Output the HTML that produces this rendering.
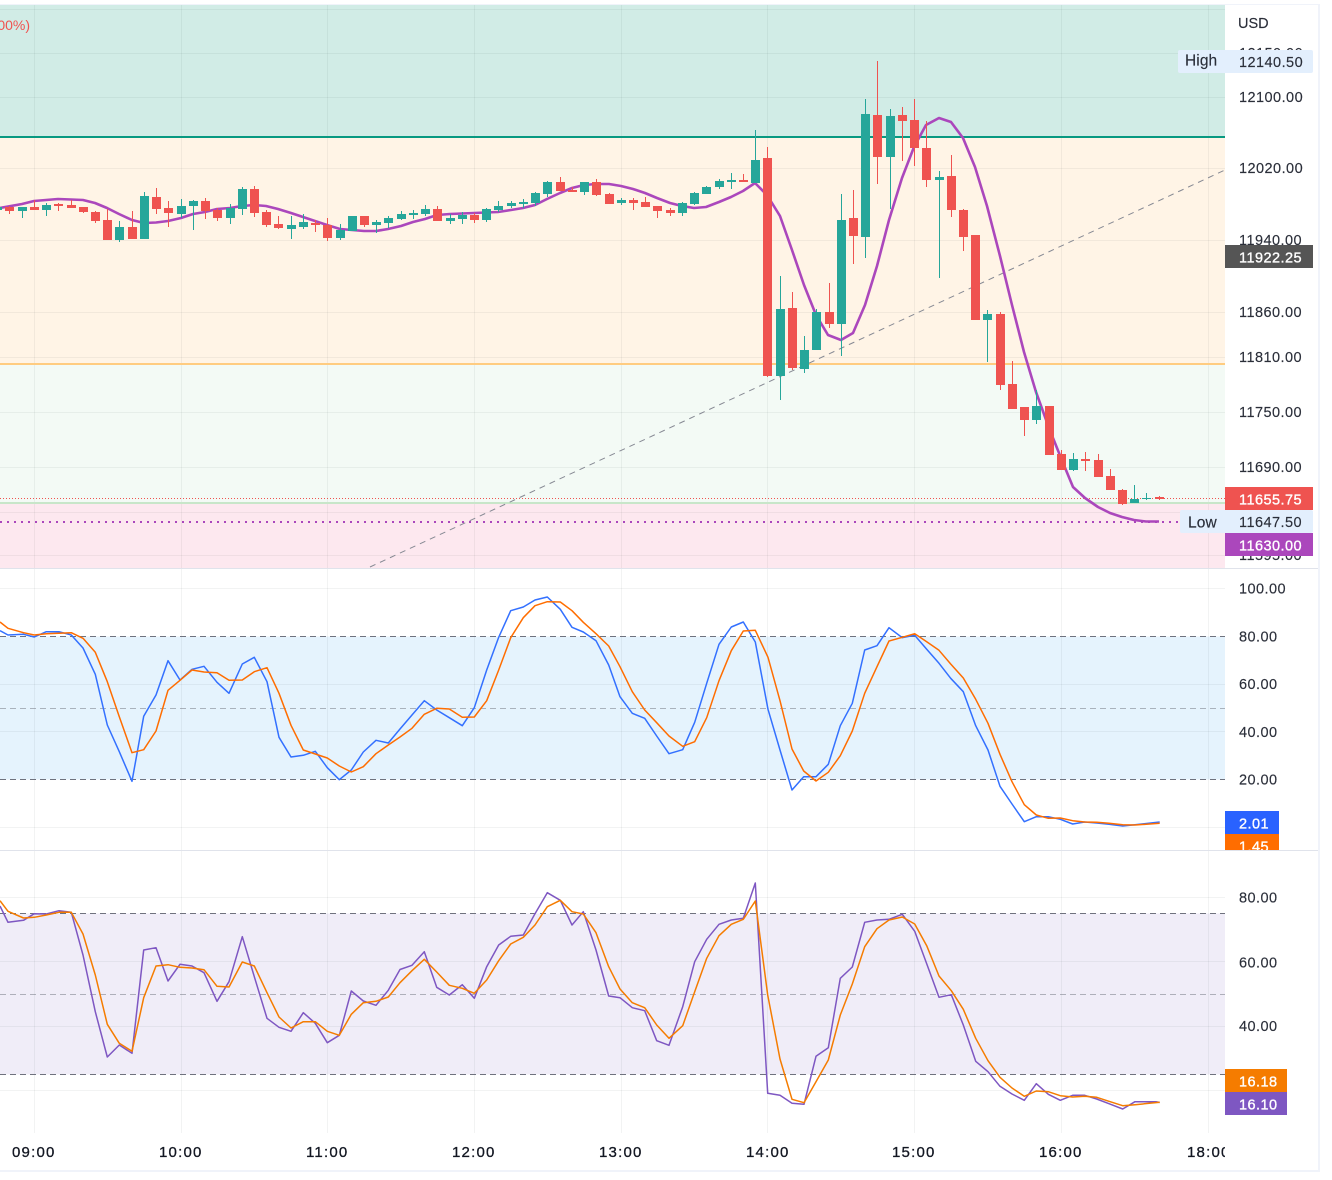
<!DOCTYPE html>
<html><head><meta charset="utf-8"><title>Chart</title>
<style>
html,body{margin:0;padding:0;background:#fff;width:1332px;height:1180px;overflow:hidden}
svg{display:block}
text{font-family:"Liberation Sans",sans-serif;font-size:14.5px;letter-spacing:.45px;fill:#2a2e39;stroke:#2a2e39;stroke-width:.15px}
.w{fill:#fff;stroke:#fff;stroke-width:.35px}
.n{letter-spacing:0}
.h{font-size:15.5px;letter-spacing:.1px}
.t{font-size:15px;letter-spacing:1.2px;fill:#131722;stroke:#131722;stroke-width:.3px}
.p{font-size:14px;fill:#f05350;stroke:none;letter-spacing:0}
</style></head><body>
<svg width="1332" height="1180" viewBox="0 0 1332 1180" xmlns="http://www.w3.org/2000/svg">
<rect x="0" y="4" width="1320" height="1168" fill="#f0f3fa"/>
<rect x="0" y="5" width="1318" height="1165" fill="#fff"/>
<!-- main bands -->
<rect x="0" y="5" width="1225" height="131" fill="#d1ece6"/>
<rect x="0" y="136" width="1225" height="228" fill="#fff4e6"/>
<rect x="0" y="364" width="1225" height="139" fill="#f3faf5"/>
<rect x="0" y="503" width="1225" height="65" fill="#fde8ef"/>
<!-- pane bands -->
<rect x="0" y="636.5" width="1225" height="143" fill="#e5f3fd"/>
<rect x="0" y="913.5" width="1225" height="161" fill="#f0edf8"/>
<!-- grid -->
<path d="M0 9.5H1225M0 53.5H1225M0 97.5H1225M0 168.5H1225M0 240.5H1225M0 312.5H1225M0 357.5H1225M0 412.5H1225M0 467.5H1225M0 512.5H1225M0 555.5H1225M0 588.5H1225M0 684.5H1225M0 731.5H1225M0 827.5H1225M0 897.5H1225M0 961.5H1225M0 1026.5H1225M0 1090.5H1225" stroke="#2a2e39" stroke-opacity=".06" stroke-width="1" fill="none"/>
<path d="M34.5 5V1133M181.5 5V1133M327.5 5V1133M474.5 5V1133M621.5 5V1133M767.5 5V1133M914.5 5V1133M1061.5 5V1133M1208.5 5V1133" stroke="#2a2e39" stroke-opacity=".06" stroke-width="1" fill="none"/>
<!-- level lines -->
<rect x="0" y="136" width="1225" height="2" fill="#089981"/>
<rect x="0" y="363" width="1225" height="2" fill="#ffcc80"/>
<rect x="0" y="502" width="1225" height="2" fill="#c8e6c9"/>
<!-- trend -->
<path d="M370 567L1225 170" stroke="#868993" stroke-width="1" stroke-dasharray="6 5" fill="none"/>
<path d="M0 498.5H1225" stroke="#f05350" stroke-width="1" stroke-dasharray="1 2" fill="none"/>
<path d="M0 522H1180" stroke="#ab47bc" stroke-width="2" stroke-dasharray="2 5" fill="none"/>
<text x="30" y="30" text-anchor="end" class="p">00%)</text>
<!-- MA -->
<path d="M0 208L22 204L34 201L58 199L71 199.5L83 200L95 203L107 208L119 214L132 220L144 223L156 222.5L168 221L181 218L193 214L205 212L217 209L230 208L242 206L254 205L266 206L278 209L291 213L303 217L315 221L327 225L340 229L352 230L364 231L376 231L388 229L401 226L413 222L425 219L437 215L450 214L462 213.5L486 212.5L498 212L511 210L523 208L535 205L547 199L560 193L572 188L584 185L596 184L609 184L621 186L633 189L645 193L657 198L670 203L682 206L694 208L706 207L719 202L731 197L743 191L755 183L767 195L780 216L792 250L804 285L816 315L828 335L841 340L853 333L865 305L877 266L889 220L902 178L914 147L926 125L939 118L951 122L963 138L975 167L987 206L1000 256L1012 305L1024 352L1036 392L1049 428L1061 458L1073 487L1085 498L1098 507L1110 513L1122 517L1134 520L1146 521.5L1159 521.5" fill="none" stroke="#ab47bc" stroke-width="2.6" stroke-linejoin="round"/>
<!-- candles: red -->
<path fill="none" stroke="#ef5350" stroke-width="1" d="M9.5 206V214M34.5 200V210M58.5 203V211M71.5 200V208M83.5 207V213M95.5 211V223M107.5 209V240M132.5 211V239M156.5 188V214M168.5 201V227M205.5 198V219M217.5 208V221M254.5 186V217M266.5 210V227M278.5 216V229M315.5 220V232M327.5 218V241M364.5 216V227M437.5 206V221M474.5 213V223M560.5 177V191M572.5 187V192M596.5 179V196M609.5 193V204M633.5 198V210M645.5 197V207M657.5 206V218M670.5 208V216M743.5 174V182M767.5 147V377M792.5 292V370M829.5 283V328M853.5 190V264M877.5 61V184M902.5 107V161M914.5 99V166M926.5 121V187M951.5 155V217M963.5 209V251M1000.5 312V390M1012.5 361V409M1024.5 407V436M1061.5 450V470M1085.5 452V471M1098.5 454V477M1110.5 469V490M1122.5 489V505M1159.5 496V500"/>
<path fill="none" stroke="#ef5350" stroke-width="9" d="M9.5 207V211M34.5 207V210M58.5 204V206M71.5 205V208M83.5 207V212M95.5 212V221M107.5 220V240M132.5 227V239M156.5 197V209M168.5 208V213M205.5 201V211M217.5 210V218M254.5 189V213M266.5 212V225M278.5 224V228M315.5 223V225M327.5 225V238M364.5 216V225M437.5 209V221M474.5 215V220M560.5 182V191M572.5 190V192M596.5 182V195M609.5 194V204M633.5 200V203M645.5 202V207M657.5 206V211M670.5 210V213M743.5 180V182M767.5 158V376M792.5 308V368M829.5 312V324M853.5 218V236M877.5 115V157M902.5 115V121M914.5 120V148M926.5 148V180M951.5 176V210M963.5 210V237M975.5 235V320M1000.5 314V385M1012.5 384V409M1024.5 407V420M1049.5 406V455M1061.5 454V470M1085.5 459V461M1098.5 460V477M1110.5 476V490M1122.5 490V504M1159.5 497V499"/>
<!-- candles: teal -->
<path fill="none" stroke="#26a69a" stroke-width="1" d="M22.5 207V218M46.5 203V216M119.5 221V242M144.5 192V239M181.5 199V218M193.5 200V230M230.5 204V224M242.5 187V215M291.5 216V239M303.5 214V229M340.5 224V240M376.5 220V233M388.5 216V228M401.5 211V220M413.5 210V219M425.5 205V216M450.5 214V224M462.5 212V224M486.5 208V222M498.5 201V212M511.5 201V208M523.5 199V208M535.5 192V206M547.5 181V197M584.5 182V195M621.5 198V205M682.5 202V216M694.5 192V205M706.5 186V194M719.5 179V189M731.5 173V189M755.5 130V183M780.5 276V400M804.5 336V373M816.5 309V350M841.5 194V356M865.5 99V258M890.5 109V209M939.5 171V278M987.5 310V362M1036.5 390V424M1073.5 453V471M1134.5 485V503M1146.5 493V500"/>
<path fill="none" stroke="#26a69a" stroke-width="9" d="M-2.5 207V210M22.5 207V211M46.5 205V210M119.5 227V240M144.5 196V239M181.5 206V214M193.5 201V206M230.5 208V218M242.5 189V209M291.5 225V229M303.5 222V227M340.5 230V238M352.5 216V231M376.5 222V225M388.5 218V223M401.5 214V219M413.5 213V215M425.5 209V214M450.5 218V221M462.5 215V219M486.5 209V220M498.5 206V210M511.5 203V206M523.5 202V204M535.5 193V203M547.5 182V194M584.5 182V192M621.5 200V203M682.5 203V213M694.5 193V204M706.5 187V194M719.5 181V187M731.5 180V182M755.5 160V183M780.5 309V376M804.5 350V369M816.5 312V350M841.5 220V324M865.5 114V237M890.5 116V157M939.5 177V180M987.5 314V320M1036.5 406V420M1073.5 459V470M1134.5 499V503M1146.5 498V499"/>
<!-- pane 2 dashes -->
<path d="M0 636.5H1225M0 779.5H1225" stroke="#6f727e" stroke-width="1" stroke-dasharray="6 4" fill="none"/>
<path d="M0 708.5H1225" stroke="#787b86" stroke-opacity=".55" stroke-width="1" stroke-dasharray="6 4" fill="none"/>
<!-- pane 3 dashes -->
<path d="M0 913.5H1225M0 1074.5H1225" stroke="#6f727e" stroke-width="1" stroke-dasharray="6 4" fill="none"/>
<path d="M0 994.5H1225" stroke="#787b86" stroke-opacity=".55" stroke-width="1" stroke-dasharray="6 4" fill="none"/>
<!-- stoch blue -->
<path fill="none" stroke="#3370ff" stroke-width="1.5" stroke-linejoin="round" d="M0 630.7L8 635L23.5 634.3L34.3 637L46.3 631.7L59 631.7L71.3 635L83 648L95.3 674.3L107.3 725L119.3 751.7L132 781.3L143.7 716.3L156 695L168 660.7L180 680L192 669.3L204 666.3L217 682.3L229 693.3L242.3 664L254.3 657.3L267 681.7L279 737.3L291 757L303.3 755.3L315.3 751.3L327.3 767.7L339.3 779.7L351.3 770L363.3 752L376 740.3L388.3 743L400 729L412 715L424.3 700.7L436.7 710L449.3 717.7L462.3 725.7L474.3 707.7L486.7 670L498.7 637.3L510.7 610.7L523.3 607L535 600L547.3 597L560.3 609.3L572 627.3L583.3 632L596 640.7L608.7 665L620 696.7L632.3 713.3L644.7 718.3L656.7 736L669 753.7L682.7 749.7L694.7 722.3L706.7 683.3L719 644.3L731.3 627L743.3 622L755.3 642L768 709.3L780 750L792 790L803.7 776.7L816 776.7L828.3 764.3L840.3 725.7L852.3 703.3L864.7 650L877 645.7L889 627.7L902.3 637.7L914.7 635.3L926.7 649.3L939 663.3L950.7 678.3L963.3 691.7L975.7 725.7L988 750L1000 786.3L1012 804L1024.3 821.7L1036.3 816.7L1048.3 816.7L1060.3 819.3L1072.7 824L1084.7 822L1096.7 823L1109 824.3L1122.7 826L1135 824.7L1159.7 822"/>
<!-- stoch orange -->
<path fill="none" stroke="#ff6d00" stroke-width="1.5" stroke-linejoin="round" d="M0 622L8 628.3L23.5 632.7L34.3 635L46.3 633.7L59 633.3L71.3 632.7L83 638.3L95.3 652.3L107.3 681.7L119.3 716.7L132 752.7L143.7 749.7L156 731L168 690.3L180 680.3L192 670L204 672L217 672.7L229 680.3L242.3 680L254.3 671.7L267 667.7L279 693.3L291 725.3L303.3 750L315.3 754L327.3 758L339.3 766L351.3 772L363.3 766.7L376 753.7L388.3 745L400 737L412 728.3L424.3 714.3L436.7 708.3L449.3 709L462.3 717.3L474.3 717L486.7 700.7L498.7 670L510.7 637.7L523.3 617.7L535 605.7L547.3 601.7L560.3 602L572 610.7L583.3 622.3L596 633.7L608.7 646L620 666.7L632.3 691.7L644.7 710L656.7 722.7L669 736L682.7 746.3L694.7 741.7L706.7 717.7L719 680.7L731.3 650.7L743.3 631L755.3 630.3L768 657.3L780 700.7L792 749L803.7 771L816 781L828.3 772.3L840.3 755.7L852.3 731L864.7 693.3L877 666.7L889 641L902.3 637.3L914.7 633.7L926.7 641.7L939 650.3L950.7 664L963.3 678L975.7 699.3L988 723.3L1000 754.3L1012 781.7L1024.3 804.7L1036.3 815L1048.3 818.3L1060.3 818L1072.7 820.7L1084.7 822L1096.7 822.3L1109 823.3L1122.7 824.7L1135 825L1159.7 823.3"/>
<!-- rsi purple -->
<path fill="none" stroke="#7e57c2" stroke-width="1.5" stroke-linejoin="round" d="M0 906L8 922.3L23.5 920.3L34.3 913.7L46.3 914L59 910.7L71.3 912.3L83 955L95.3 1011.7L107.3 1057L119.3 1045L132 1053.3L143.7 950L156 947.7L168 981L180 964.3L192 966L204 972.7L217 1001.3L229 981.7L242.3 936.7L254.3 976.7L267 1018.3L279 1027.3L291 1031.3L303.3 1012.7L315.3 1023.3L327.3 1042.7L339.3 1035.3L351.3 991L363.3 1001L376 1005.3L388.3 990.3L400 969.5L412 965.3L424.3 951.7L436.7 987.3L449.3 995L462.3 984.7L474.3 998.3L486.7 966.7L498.7 945L510.7 936.3L523.3 935L535 913.7L547.3 892.7L560.3 900.3L572 925L583.3 911.7L596 950L608.7 996L620 997.7L632.3 1007.7L644.7 1010.7L656.7 1040.7L669 1045.3L682.7 1006.7L694.7 961.7L706.7 939.3L719 924.3L731.3 920L743.3 918.3L755.3 883L767.7 1093.3L780 1095.3L792 1103.3L804 1104.3L816 1056.3L828.3 1047.7L840.3 978.3L852.3 967L864.7 922.3L877 920L889 919.3L902.3 914.3L914.7 931.3L926.7 963.7L939 997.3L951.3 994.7L963.3 1025L975.7 1061.3L988 1071.7L1000 1086.3L1012 1094L1024.3 1100.3L1036.3 1083.7L1048.3 1094.3L1060.3 1100.3L1072.7 1095.3L1084.7 1095.3L1096.7 1099L1109 1103.7L1122.7 1109L1135 1101.7L1156 1101.7L1159.7 1102.5"/>
<!-- rsi orange -->
<path fill="none" stroke="#f57c00" stroke-width="1.5" stroke-linejoin="round" d="M0 900.7L8 911.3L23.5 918L34.3 917.3L46.3 915L59 912.3L71.3 912.3L83 934L95.3 975L107.3 1024.3L119.3 1043.3L132 1051.3L143.7 997.7L156 966L168 964.7L180 967.3L192 968L204 969.7L217 986.3L229 987L242.3 962L254.3 966L267 992.7L279 1017L291 1028L303.3 1021.7L315.3 1021.7L327.3 1031.3L339.3 1035.3L351.3 1014.3L363.3 1002.7L376 1001.3L388.3 997L400 982.7L412 970.7L424.3 959.3L436.7 972L449.3 985.3L462.3 988.3L474.3 993.3L486.7 980L498.7 960.7L510.7 944L523.3 937.3L535 925L547.3 906.7L560.3 900.3L572 911.7L583.3 914L596 932.7L608.7 966.7L620 989L632.3 1002.7L644.7 1007.7L656.7 1025L669 1038.3L682.7 1025.7L694.7 991.7L706.7 958.3L719 935.7L731.3 924.3L743.3 919.3L755.3 901L767.7 995L780 1059L792 1099.3L804 1102.7L816 1081.7L828.3 1060L840.3 1015L852.3 984L864.7 946.7L877 928.7L889 920L902.3 917L914.7 924L926.7 945.7L939 976L951.3 990.7L963.3 1009.3L975.7 1038.3L988 1060.7L1000 1077.3L1012 1088L1024.3 1096.3L1036.3 1091L1048.3 1091.7L1060.3 1095.7L1072.7 1097L1084.7 1096.3L1096.7 1097.3L1109 1101.3L1122.7 1105.7L1135 1104.7L1159.7 1102.3"/>
<!-- axis white -->
<rect x="1225" y="5" width="93" height="1165" fill="#fff"/>
<text x="1238" y="28" class="n">USD</text>
<text x="1239" y="58">12150.00</text>
<text x="1239" y="102">12100.00</text>
<text x="1239" y="173">12020.00</text>
<text x="1239" y="245">11940.00</text>
<text x="1239" y="317">11860.00</text>
<text x="1239" y="362">11810.00</text>
<text x="1239" y="417">11750.00</text>
<text x="1239" y="472">11690.00</text>
<text x="1239" y="560">11595.00</text>
<!-- High -->
<rect x="1178" y="50" width="135" height="23" rx="2" fill="#e3effd"/>
<text x="1185" y="65.500" class="h">High</text>
<text x="1239" y="67">12140.50</text>
<!-- last -->
<rect x="1225" y="245" width="88" height="23" fill="#555"/>
<text x="1239" y="262.500" class="w">11922.25</text>
<rect x="1225" y="487" width="88" height="23" fill="#ef5350"/>
<text x="1239" y="504.500" class="w">11655.75</text>
<rect x="1180" y="510" width="133" height="23" rx="2" fill="#e3effd"/>
<text x="1188" y="527.500" class="h">Low</text>
<text x="1239" y="527">11647.50</text>
<rect x="1225" y="533" width="88" height="23" fill="#ab47bc"/>
<text x="1239" y="550.500" class="w">11630.00</text>
<!-- cover below main pane -->
<rect x="1225" y="569" width="93" height="282" fill="#fff"/>
<text x="1239" y="593.500">100.00</text>
<text x="1239" y="641.500">80.00</text>
<text x="1239" y="689">60.00</text>
<text x="1239" y="737">40.00</text>
<text x="1239" y="784.500">20.00</text>
<rect x="1225" y="811" width="54" height="23" fill="#2962ff"/>
<text x="1239" y="828.500" class="w">2.01</text>
<rect x="1225" y="834" width="54" height="23" fill="#ff6d00"/>
<text x="1239" y="851.500" class="w">1.45</text>
<rect x="1225" y="851" width="93" height="319" fill="#fff"/>
<text x="1239" y="902.500">80.00</text>
<text x="1239" y="967.500">60.00</text>
<text x="1239" y="1031">40.00</text>
<rect x="1225" y="1069" width="62" height="23" fill="#f57c00"/>
<text x="1239" y="1086.500" class="w">16.18</text>
<rect x="1225" y="1092" width="62" height="23" fill="#7e57c2"/>
<text x="1239" y="1109.500" class="w">16.10</text>
<!-- separators -->
<rect x="0" y="568" width="1318" height="1" fill="#e0e3eb"/>
<rect x="0" y="850" width="1318" height="1" fill="#e0e3eb"/>
<!-- time -->
<text x="12" y="1157" class="t">09:00</text>
<text x="159" y="1157" class="t">10:00</text>
<text x="306" y="1157" class="t">11:00</text>
<text x="452" y="1157" class="t">12:00</text>
<text x="599" y="1157" class="t">13:00</text>
<text x="746" y="1157" class="t">14:00</text>
<text x="892" y="1157" class="t">15:00</text>
<text x="1039" y="1157" class="t">16:00</text>
<text x="1187" y="1157" class="t">18:00</text>
<rect x="1225" y="1135" width="93" height="35" fill="#fff"/>
</svg>
</body></html>
